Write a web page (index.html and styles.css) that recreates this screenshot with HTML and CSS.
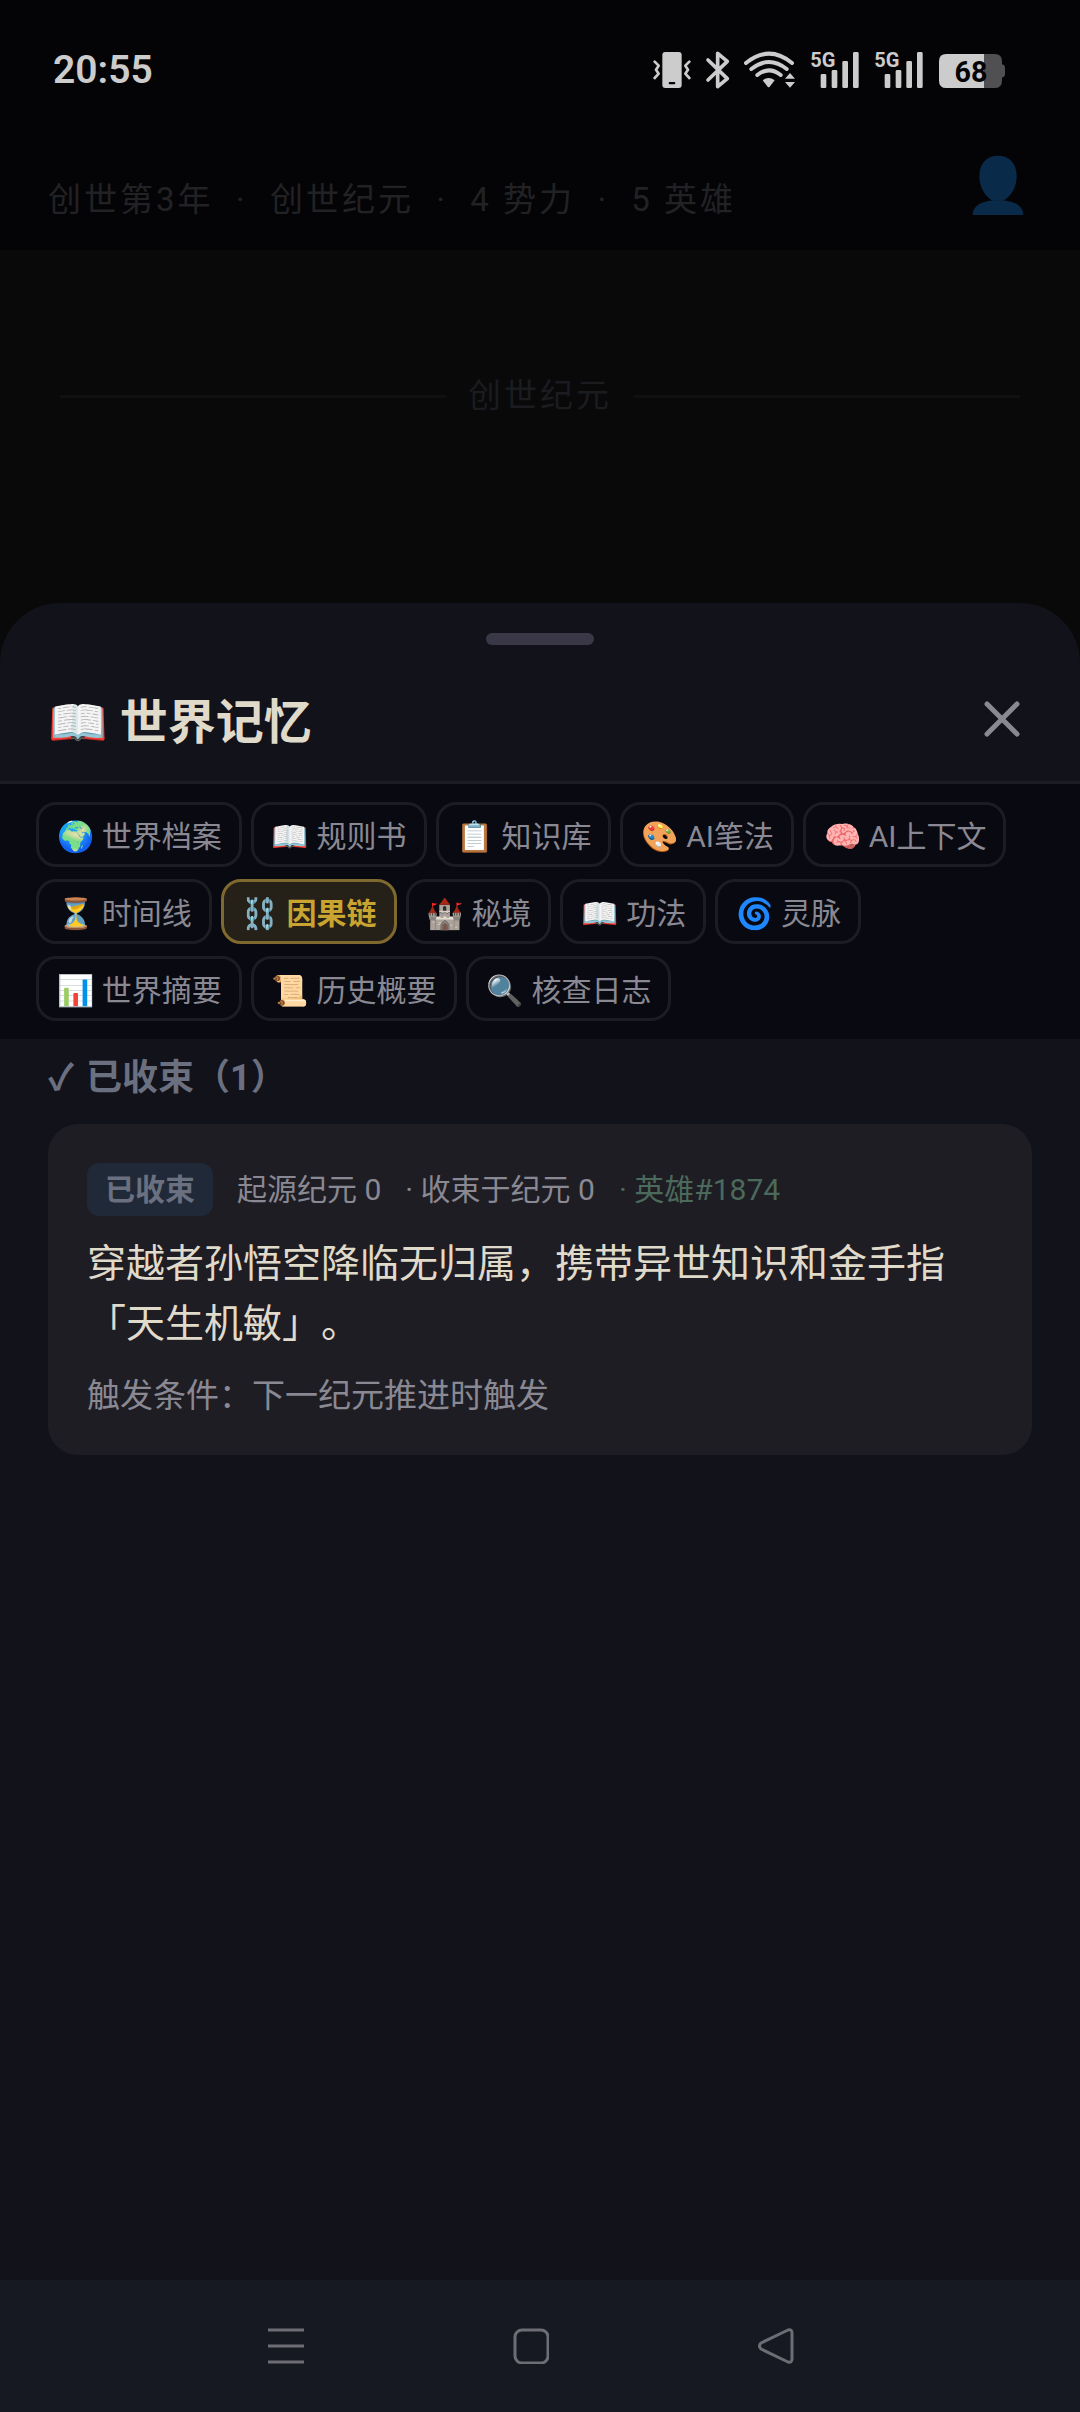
FILE: index.html
```html
<!DOCTYPE html>
<html lang="zh-CN">
<head>
  <meta charset="UTF-8" />
  <meta name="viewport" content="width=device-width, initial-scale=1.0"/>
  <title>世界记忆</title>
  <link rel="stylesheet" href="styles.css">
</head>
<body>
  <!-- Dimmed page behind the sheet -->
  <div class="topbar">
    <div class="status-bar">
      <span class="clock">20:55</span>
      <div class="status-icons">
        <svg width="38" height="40" viewBox="69 60 114 120">
          <rect x="97" y="66" width="58" height="108" rx="9" fill="#ccc"/>
          <rect x="116" y="156" width="20" height="7" rx="3" fill="#040406"/>
          <path d="M74 95l12 12-8 12 8 12-12 13M178 95l-12 12 8 12-8 12 12 13" fill="none" stroke="#ccc" stroke-width="8" stroke-linecap="round" stroke-linejoin="round"/>
        </svg>
        <svg width="25" height="40" viewBox="228 60 75 120">
          <path d="M237 90l58 56-29 24V70l29 24-58 56" fill="none" stroke="#ccc" stroke-width="11" stroke-linecap="round" stroke-linejoin="round"/>
        </svg>
        <svg width="52" height="40" viewBox="348 60 156 120">
          <path d="M354 99q69-56 138 0M370 117q53-42 106 0M388 135q35-28 70 0" fill="none" stroke="#ccc" stroke-width="12" stroke-linecap="round"/>
          <path d="M404 151q18-14 36 0l-15 19q-3 3-6 0z" fill="#ccc"/>
          <path d="M471 146l15-17 15 17zM471 156h30l-15 17z" fill="#ccc"/>
        </svg>
        <svg width="50" height="60" viewBox="540 30 150 180">
          <text class="net" x="541" y="110">5G</text>
          <path d="M572 136q0-4 4-4h9q4 0 4 4v34q0 4-4 4h-9q-4 0-4-4zM605 124q0-4 4-4h9q4 0 4 4v46q0 4-4 4h-9q-4 0-4-4zM637 97q0-4 4-4h9q4 0 4 4v73q0 4-4 4h-9q-4 0-4-4zM669 70q0-4 4-4h9q4 0 4 4v100q0 4-4 4h-9q-4 0-4-4z" fill="#ccc"/>
        </svg>
        <svg width="50" height="60" viewBox="540 30 150 180">
          <text class="net" x="541" y="110">5G</text>
          <path d="M572 136q0-4 4-4h9q4 0 4 4v34q0 4-4 4h-9q-4 0-4-4zM605 124q0-4 4-4h9q4 0 4 4v46q0 4-4 4h-9q-4 0-4-4zM637 97q0-4 4-4h9q4 0 4 4v73q0 4-4 4h-9q-4 0-4-4zM669 70q0-4 4-4h9q4 0 4 4v100q0 4-4 4h-9q-4 0-4-4z" fill="#ccc"/>
        </svg>
        <svg width="68" height="40" viewBox="924 60 204 120">
          <path d="M1062 72h32q22 0 22 22v9q9 2 9 10v20q0 8-9 10v9q0 22-22 22h-32z" fill="#505052"/>
          <path d="M1062 72H949q-22 0-22 22v58q0 22 22 22h113z" fill="#ccc"/>
          <text class="battery" x="1023" y="155" text-anchor="middle">68</text>
        </svg>
      </div>
    </div>
    <div class="world-bar">
      <span class="world-info">创世第3年&nbsp; ·&nbsp; 创世纪元&nbsp; ·&nbsp; 4 势力&nbsp; ·&nbsp; 5 英雄</span>
      <button class="user" aria-label="用户">
        <svg width="52" height="60" viewBox="0 0 156 180">
          <path d="M78 2c33 0 56 22 56 62 0 34-18 62-40 73h-32C40 126 22 98 22 64 22 24 45 2 78 2z" fill="#092a48"/>
          <path d="M2 180c0-26 24-44 76-44s76 18 76 44z" fill="#092a48"/>
        </svg>
      </button>
    </div>
  </div>
  <div class="story">
    <div class="era"><span>创世纪元</span></div>
  </div>

  <!-- World memory sheet -->
  <div class="sheet">
    <div class="handle"></div>
    <div class="sheet-header">
      <h1>📖 世界记忆</h1>
      <button class="close" aria-label="关闭">
        <svg width="36" height="36" viewBox="0 0 36 36">
          <path d="M3 3l30 30M33 3L3 33" stroke="#8a8993" stroke-width="5" stroke-linecap="round"/>
        </svg>
      </button>
    </div>

    <div class="tabs">
      <button>🌍 世界档案</button>
      <button>📖 规则书</button>
      <button>📋 知识库</button>
      <button>🎨 AI笔法</button>
      <button>🧠 AI上下文</button>
      <button>⏳ 时间线</button>
      <button class="active">⛓️ 因果链</button>
      <button>🏰 秘境</button>
      <button>📖 功法</button>
      <button>🌀 灵脉</button>
      <button>📊 世界摘要</button>
      <button>📜 历史概要</button>
      <button>🔍 核查日志</button>
    </div>

    <div class="content">
      <h2><span class="check">✓</span> 已收束（1）</h2>
      <div class="card">
        <div class="meta">
          <span class="badge">已收束</span>
          <span>起源纪元 0</span>
          <span>· 收束于纪元 0</span>
          <span class="hero">· 英雄#1874</span>
        </div>
        <p class="desc">穿越者孙悟空降临无归属，携带异世知识和金手指「天生机敏」。</p>
        <p class="trigger">触发条件：下一纪元推进时触发</p>
      </div>
    </div>
  </div>

  <!-- System navigation -->
  <div class="nav">
    <button aria-label="最近任务">
      <svg width="36" height="36" viewBox="0 0 36 36"><path d="M0 2h36M0 18h36M0 34h36" stroke="#6c6d75" stroke-width="3"/></svg>
    </button>
    <button aria-label="主页">
      <svg width="36" height="36" viewBox="0 0 36 36"><rect x="2" y="2" width="33" height="33" rx="7" fill="none" stroke="#6c6d75" stroke-width="3"/></svg>
    </button>
    <button aria-label="返回">
      <svg width="36" height="36" viewBox="0 0 36 36"><path d="M30 2L3 15q-3 3 0 6l27 13q4 1 4-3V5q0-4-4-3z" fill="none" stroke="#6c6d75" stroke-width="3" stroke-linejoin="round"/></svg>
    </button>
  </div>
</body>
</html>
```
FILE: styles.css
```css
* {
  box-sizing: border-box;
}

body {
  margin: 0;
  min-height: 100vh;
  display: flex;
  flex-direction: column;
  background-color: #090909;
  color: #8a8993;
  font-family: Roboto, "Noto Sans CJK SC", "Noto Color Emoji", sans-serif;
  text-spacing-trim: space-all;
}

button {
  margin: 0;
  padding: 0;
  border: none;
  background: none;
  color: inherit;
  font-family: inherit;
  cursor: pointer;
}

svg {
  display: block;
}

h1, h2, p {
  margin: 0;
}

.topbar {
  background-color: #040406;
  padding-bottom: 18px;
}

.status-bar {
  display: flex;
  justify-content: space-between;
  align-items: center;
  height: 140px;
  padding: 0 74px 0 53px;
}

.clock {
  color: #ccc;
  font-size: 39px;
  font-weight: 600;
}

.status-icons {
  display: flex;
  align-items: center;
  gap: 14px;
}

.net {
  font-size: 60px;
  font-weight: bold;
  fill: #ccc;
}

.battery {
  font-size: 86px;
  font-weight: bold;
  fill: #040406;
}

.world-bar {
  display: flex;
  justify-content: space-between;
  align-items: center;
  height: 92px;
  padding: 0 56px 0 48px;
}

.topbar .user {
  padding-bottom: 2px;
}

.world-info {
  padding-top: 22px;
  font-size: 33px;
  letter-spacing: 3px;
  color: #222225;
}

.story {
  padding: 121px 60px 182px;
}

.era {
  display: flex;
  align-items: center;
  gap: 22px;
  line-height: 50px;
  font-size: 33px;
  letter-spacing: 3px;
  color: #1a1c20;
}

.era::before,
.era::after {
  content: "";
  flex: 1;
  height: 3px;
  background-color: #101011;
}

.sheet {
  flex: 1;
  padding-top: 30px;
  background-color: #12121a;
  border-radius: 60px 60px 0 0;
}

.handle {
  width: 108px;
  height: 12px;
  margin: 0 auto;
  border-radius: 6px;
  background-color: #3a3847;
}

.sheet-header {
  display: flex;
  justify-content: space-between;
  align-items: center;
  height: 139px;
  padding: 12px 60px 0 48px;
  border-bottom: 3px solid #1c1c24;
}

.sheet-header h1 {
  padding-bottom: 3px;
  font-size: 48px;
  font-weight: bold;
  color: #e0dacb;
}

.tabs {
  display: flex;
  flex-wrap: wrap;
  gap: 12px 9px;
  padding: 18px 36px;
  background-color: #090912;
}

.tabs button {
  height: 65px;
  padding: 0 17px 2px 18px;
  border: 3px solid #1c1c22;
  border-radius: 20px;
  font-size: 30px;
}

.tabs .active {
  background-color: #252018;
  border-color: #80692e;
  color: #c9a431;
  font-weight: bold;
}

.content {
  padding: 12px 48px 48px;
}

.content h2 {
  font-size: 36px;
  line-height: 54px;
  color: #6b7080;
}

.check {
  margin-right: 3px;
}

.card {
  margin-top: 19px;
  padding: 39px 39px 32px;
  border-radius: 30px;
  background-color: #1e1d23;
}

.meta {
  display: flex;
  align-items: center;
  gap: 24px;
  font-size: 30px;
  line-height: 53px;
}

.badge {
  padding: 0 18px;
  border-radius: 12px;
  background-color: #1f2937;
  color: #6b7080;
  font-weight: bold;
}

.hero {
  color: #4b6a5c;
}

.desc {
  margin-top: 18px;
  font-size: 39px;
  line-height: 60px;
  color: #e0dacb;
}

.trigger {
  margin-top: 15px;
  font-size: 33px;
  line-height: 54px;
}

.nav {
  display: flex;
  justify-content: center;
  height: 132px;
  padding-right: 18px;
  background-color: #161822;
}

.nav button {
  width: 245px;
  display: flex;
  justify-content: center;
  align-items: center;
}
```
